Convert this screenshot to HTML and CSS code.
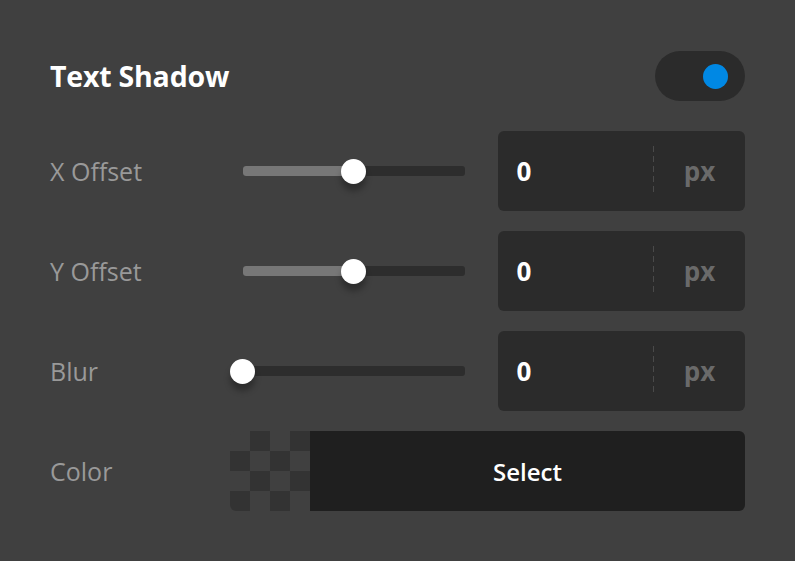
FILE: index.html
```html
<!DOCTYPE html>
<html>
<head>
<meta charset="utf-8">
<link rel="stylesheet" href="styles.css">
</head>
<body>
<div class="panel">
  <div class="header">
    <div class="title">Text Shadow</div>
    <div class="toggle"><span class="knob"></span></div>
  </div>
  <div class="rows">
    <div class="label">X Offset</div>
    <div class="slider">
      <div class="track">
        <div class="fill" style="width:50%"></div>
        <div class="thumb" style="left:50%"></div>
      </div>
    </div>
    <div class="box">
      <div class="value">0</div>
      <div class="divider"></div>
      <div class="unit">px</div>
    </div>

    <div class="label">Y Offset</div>
    <div class="slider">
      <div class="track">
        <div class="fill" style="width:50%"></div>
        <div class="thumb" style="left:50%"></div>
      </div>
    </div>
    <div class="box">
      <div class="value">0</div>
      <div class="divider"></div>
      <div class="unit">px</div>
    </div>

    <div class="label">Blur</div>
    <div class="slider">
      <div class="track">
        <div class="fill" style="width:0%"></div>
        <div class="thumb" style="left:0%"></div>
      </div>
    </div>
    <div class="box">
      <div class="value">0</div>
      <div class="divider"></div>
      <div class="unit">px</div>
    </div>

    <div class="label">Color</div>
    <div class="color">
      <div class="checker"></div>
      <div class="select">Select</div>
    </div>
  </div>
</div>
</body>
</html>
```
FILE: styles.css
```css
html, body {
  margin: 0;
  padding: 0;
  background: #404040;
}
body {
  font-family: "Open Sans", "Noto Sans", sans-serif;
  width: 795px;
  height: 561px;
  overflow: hidden;
}
.panel {
  padding: 51px 50px 0 50px;
}
.header {
  display: flex;
  justify-content: space-between;
  align-items: center;
  height: 50px;
  margin-bottom: 30px;
}
.title {
  color: #ffffff;
  font-weight: 700;
  font-size: 28.5px;
  letter-spacing: -0.2px;
}
.toggle {
  width: 90px;
  height: 50px;
  border-radius: 25px;
  background: #2b2b2b;
  display: flex;
  align-items: center;
  justify-content: flex-end;
  padding-right: 17px;
  box-sizing: border-box;
}
.knob {
  width: 25px;
  height: 25px;
  border-radius: 50%;
  background: #0088e4;
}
.rows {
  display: grid;
  grid-template-columns: 160px 1fr 1fr;
  grid-auto-rows: 80px;
  column-gap: 20px;
  row-gap: 20px;
}
.label {
  color: #999999;
  font-size: 25px;
  display: flex;
  align-items: center;
}
.slider {
  display: flex;
  align-items: center;
  padding: 0 12.5px;
}
.track {
  position: relative;
  flex: 1;
  height: 10px;
  border-radius: 3px;
  background: #2d2d2d;
}
.fill {
  height: 100%;
  border-radius: 3px 0 0 3px;
  background: #777777;
}
.thumb {
  position: absolute;
  top: 50%;
  width: 25px;
  height: 25px;
  margin: -12.5px 0 0 -12.5px;
  border-radius: 50%;
  background: #ffffff;
  box-shadow: 0 7px 6px rgba(0, 0, 0, 0.3);
}
.box {
  display: flex;
  align-items: center;
  background: #2b2b2b;
  border-radius: 6px;
}
.value {
  flex: 1;
  padding-left: 19px;
  color: #ffffff;
  font-weight: 700;
  font-size: 26px;
}
.divider {
  width: 1px;
  height: 50px;
  background: repeating-linear-gradient(to bottom, #4a4a4a 0 6px, transparent 6px 10px);
}
.unit {
  width: 91px;
  text-align: center;
  color: #6a6a6a;
  font-weight: 700;
  font-size: 26px;
}
.color {
  grid-column: 2 / 4;
  display: flex;
  border-radius: 6px;
  overflow: hidden;
}
.checker {
  width: 80px;
  background-color: #404040;
  background-image: conic-gradient(#333333 0 25%, #404040 0 50%, #333333 0 75%, #404040 0);
  background-size: 40px 40px;
}
.select {
  flex: 1;
  display: flex;
  align-items: center;
  justify-content: center;
  background: #1f1f1f;
  color: #ffffff;
  font-weight: 600;
  font-size: 24px;
}
```
